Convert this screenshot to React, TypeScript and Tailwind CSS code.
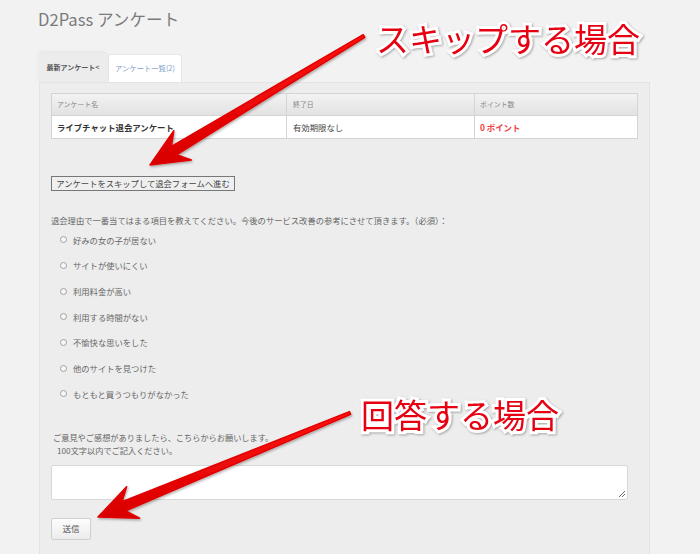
import React from "react";

type P = [number, number];

function arrowPoints(t: P, p: P, headLen = 38, headHalf = 17, neckLen = 28, neckHalf = 5, tailHalf = 1.5): string {
  const dx = p[0] - t[0];
  const dy = p[1] - t[1];
  const L = Math.hypot(dx, dy);
  const ux = dx / L;
  const uy = dy / L;
  const nx = -uy;
  const ny = ux;
  const pt = (x: number, y: number) => `${x.toFixed(1)},${y.toFixed(1)}`;
  const nk = [p[0] - neckLen * ux, p[1] - neckLen * uy];
  const wb = [p[0] - headLen * ux, p[1] - headLen * uy];
  return [
    pt(t[0] + tailHalf * nx, t[1] + tailHalf * ny),
    pt(nk[0] + neckHalf * nx, nk[1] + neckHalf * ny),
    pt(wb[0] + headHalf * nx, wb[1] + headHalf * ny),
    pt(p[0], p[1]),
    pt(wb[0] - headHalf * nx, wb[1] - headHalf * ny),
    pt(nk[0] - neckHalf * nx, nk[1] - neckHalf * ny),
    pt(t[0] - tailHalf * nx, t[1] - tailHalf * ny),
  ].join(" ");
}

const options = [
  "好みの女の子が居ない",
  "サイトが使いにくい",
  "利用料金が高い",
  "利用する時間がない",
  "不愉快な思いをした",
  "他のサイトを見つけた",
  "もともと買うつもりがなかった",
];

const font = "font-['Noto_Sans_CJK_JP','Noto_Sans',sans-serif]";

export default function App() {
  return (
    <div className={`relative w-[700px] h-[554px] overflow-hidden bg-[#f2f2f2] ${font} flex flex-col`}>
      <div className="pt-[8px] pl-[38px] text-[16.6px] leading-[22px] text-[#7a7a7a]">D2Pass アンケート</div>

      <div className="mt-[23px] ml-[39px] flex items-end">
        <div className="w-[68px] h-[29px] bg-[#ececec] rounded-t-[3px] shadow-[0_-1px_4px_rgba(0,0,0,0.07)] flex items-center justify-center text-[7px] font-bold text-[#555]">
          最新アンケート&lt;
        </div>
        <div className="ml-[1px] w-[74px] h-[28px] bg-white rounded-t-[3px] border border-b-0 border-[#e6e6e6] flex items-center justify-center text-[7.3px] text-[#7e9cc4]">
          アンケート一覧(2)
        </div>
      </div>

      <div className="ml-[39px] w-[611px] flex-1 bg-[#ededed] border-l border-r border-t border-[#e3e3e3] pl-[11px] pt-[10px] flex flex-col items-start">
        <div className="w-[587px] border border-[#d4d4d4] bg-white">
          <div className="grid grid-cols-[235px_188px_1fr] h-[22px] bg-gradient-to-b from-[#f3f3f3] to-[#e2e2e2] border-b border-[#d4d4d4] text-[6.9px] text-[#888]">
            <div className="flex items-center pl-[5px] border-r border-[#d4d4d4]">アンケート名</div>
            <div className="flex items-center pl-[6px] border-r border-[#d4d4d4]">終了日</div>
            <div className="flex items-center pl-[5px]">ポイント数</div>
          </div>
          <div className="grid grid-cols-[235px_188px_1fr] h-[22px] text-[8.4px]">
            <div className="flex items-center pl-[5px] border-r border-[#d4d4d4] font-bold text-[#333]">ライブチャット退会アンケート</div>
            <div className="flex items-center pl-[6px] border-r border-[#d4d4d4] text-[#444]">有効期限なし</div>
            <div className="flex items-center pl-[5px] font-bold text-[#f04040]">0 ポイント</div>
          </div>
        </div>

        <button className="mt-[37px] w-[184px] h-[15px] border border-[#777] bg-[#efefef] text-[8.3px] leading-[13px] text-[#444] flex items-center justify-center">
          アンケートをスキップして退会フォームへ進む
        </button>

        <div className="mt-[24px] text-[8.3px] leading-[11px] text-[#666]">
          退会理由で一番当てはまる項目を教えてください。今後のサービス改善の参考にさせて頂きます。（必須）：
        </div>

        <div className="mt-[1px] flex flex-col">
          {options.map((o) => (
            <div key={o} className="h-[25.67px] flex items-center pl-[9px] text-[8.3px] text-[#666]">
              <span className="w-[7px] h-[7px] rounded-full border border-[#a0a0a0] bg-[#f7f7f7]" />
              <span className="ml-[6px]">{o}</span>
            </div>
          ))}
        </div>

        <div className="mt-[24px] pl-[2px] text-[8.2px] leading-[13px] text-[#666]">
          <div>ご意見やご感想がありましたら、こちらからお願いします。</div>
          <div className="pl-[4px]">100文字以内でご記入ください。</div>
        </div>

        <div className="relative mt-[8px] w-[577px] h-[35px] bg-white border border-[#d8d8d8] rounded-[2px]">
          <svg className="absolute right-[1px] bottom-[1px]" width="8" height="8" viewBox="0 0 8 8">
            <path d="M7 1 L1 7 M7 4 L4 7" stroke="#666" strokeWidth="1" />
          </svg>
        </div>

        <button className="mt-[18px] w-[40px] h-[22px] border border-[#cfcfcf] rounded-[2px] bg-gradient-to-b from-[#fdfdfd] to-[#ececec] text-[8.5px] text-[#555] flex items-center justify-center">
          送信
        </button>
      </div>

      <svg className="absolute inset-0 pointer-events-none" width="700" height="554" viewBox="0 0 700 554">
        <defs>
          <filter id="sh" x="-10%" y="-10%" width="130%" height="130%">
            <feDropShadow dx="1" dy="1.5" stdDeviation="1.2" floodColor="#000" floodOpacity="0.3" />
          </filter>
          <linearGradient id="rg" x1="0" y1="0" x2="0" y2="1">
            <stop offset="0" stopColor="#ff1010" />
            <stop offset="1" stopColor="#d80000" />
          </linearGradient>
        </defs>
        <polygon points={arrowPoints([364, 36], [150, 165])} fill="url(#rg)" stroke="#e00000" strokeWidth="1.5" strokeLinejoin="round" filter="url(#sh)" />
        <polygon points={arrowPoints([350, 413], [98, 517])} fill="url(#rg)" stroke="#e00000" strokeWidth="1.5" strokeLinejoin="round" filter="url(#sh)" />
      </svg>

      <div className="absolute left-[376px] top-[20px] text-[33px] leading-[36px] font-normal text-[#e60012] [-webkit-text-stroke:6px_#fff] [paint-order:stroke_fill] [filter:drop-shadow(1px_1px_1px_rgba(0,0,0,0.3))] whitespace-nowrap">
        スキップする場合
      </div>
      <div className="absolute left-[361px] top-[396px] text-[33px] leading-[36px] font-normal text-[#e60012] [-webkit-text-stroke:6px_#fff] [paint-order:stroke_fill] [filter:drop-shadow(1px_1px_1px_rgba(0,0,0,0.3))] whitespace-nowrap">
        回答する場合
      </div>
    </div>
  );
}
